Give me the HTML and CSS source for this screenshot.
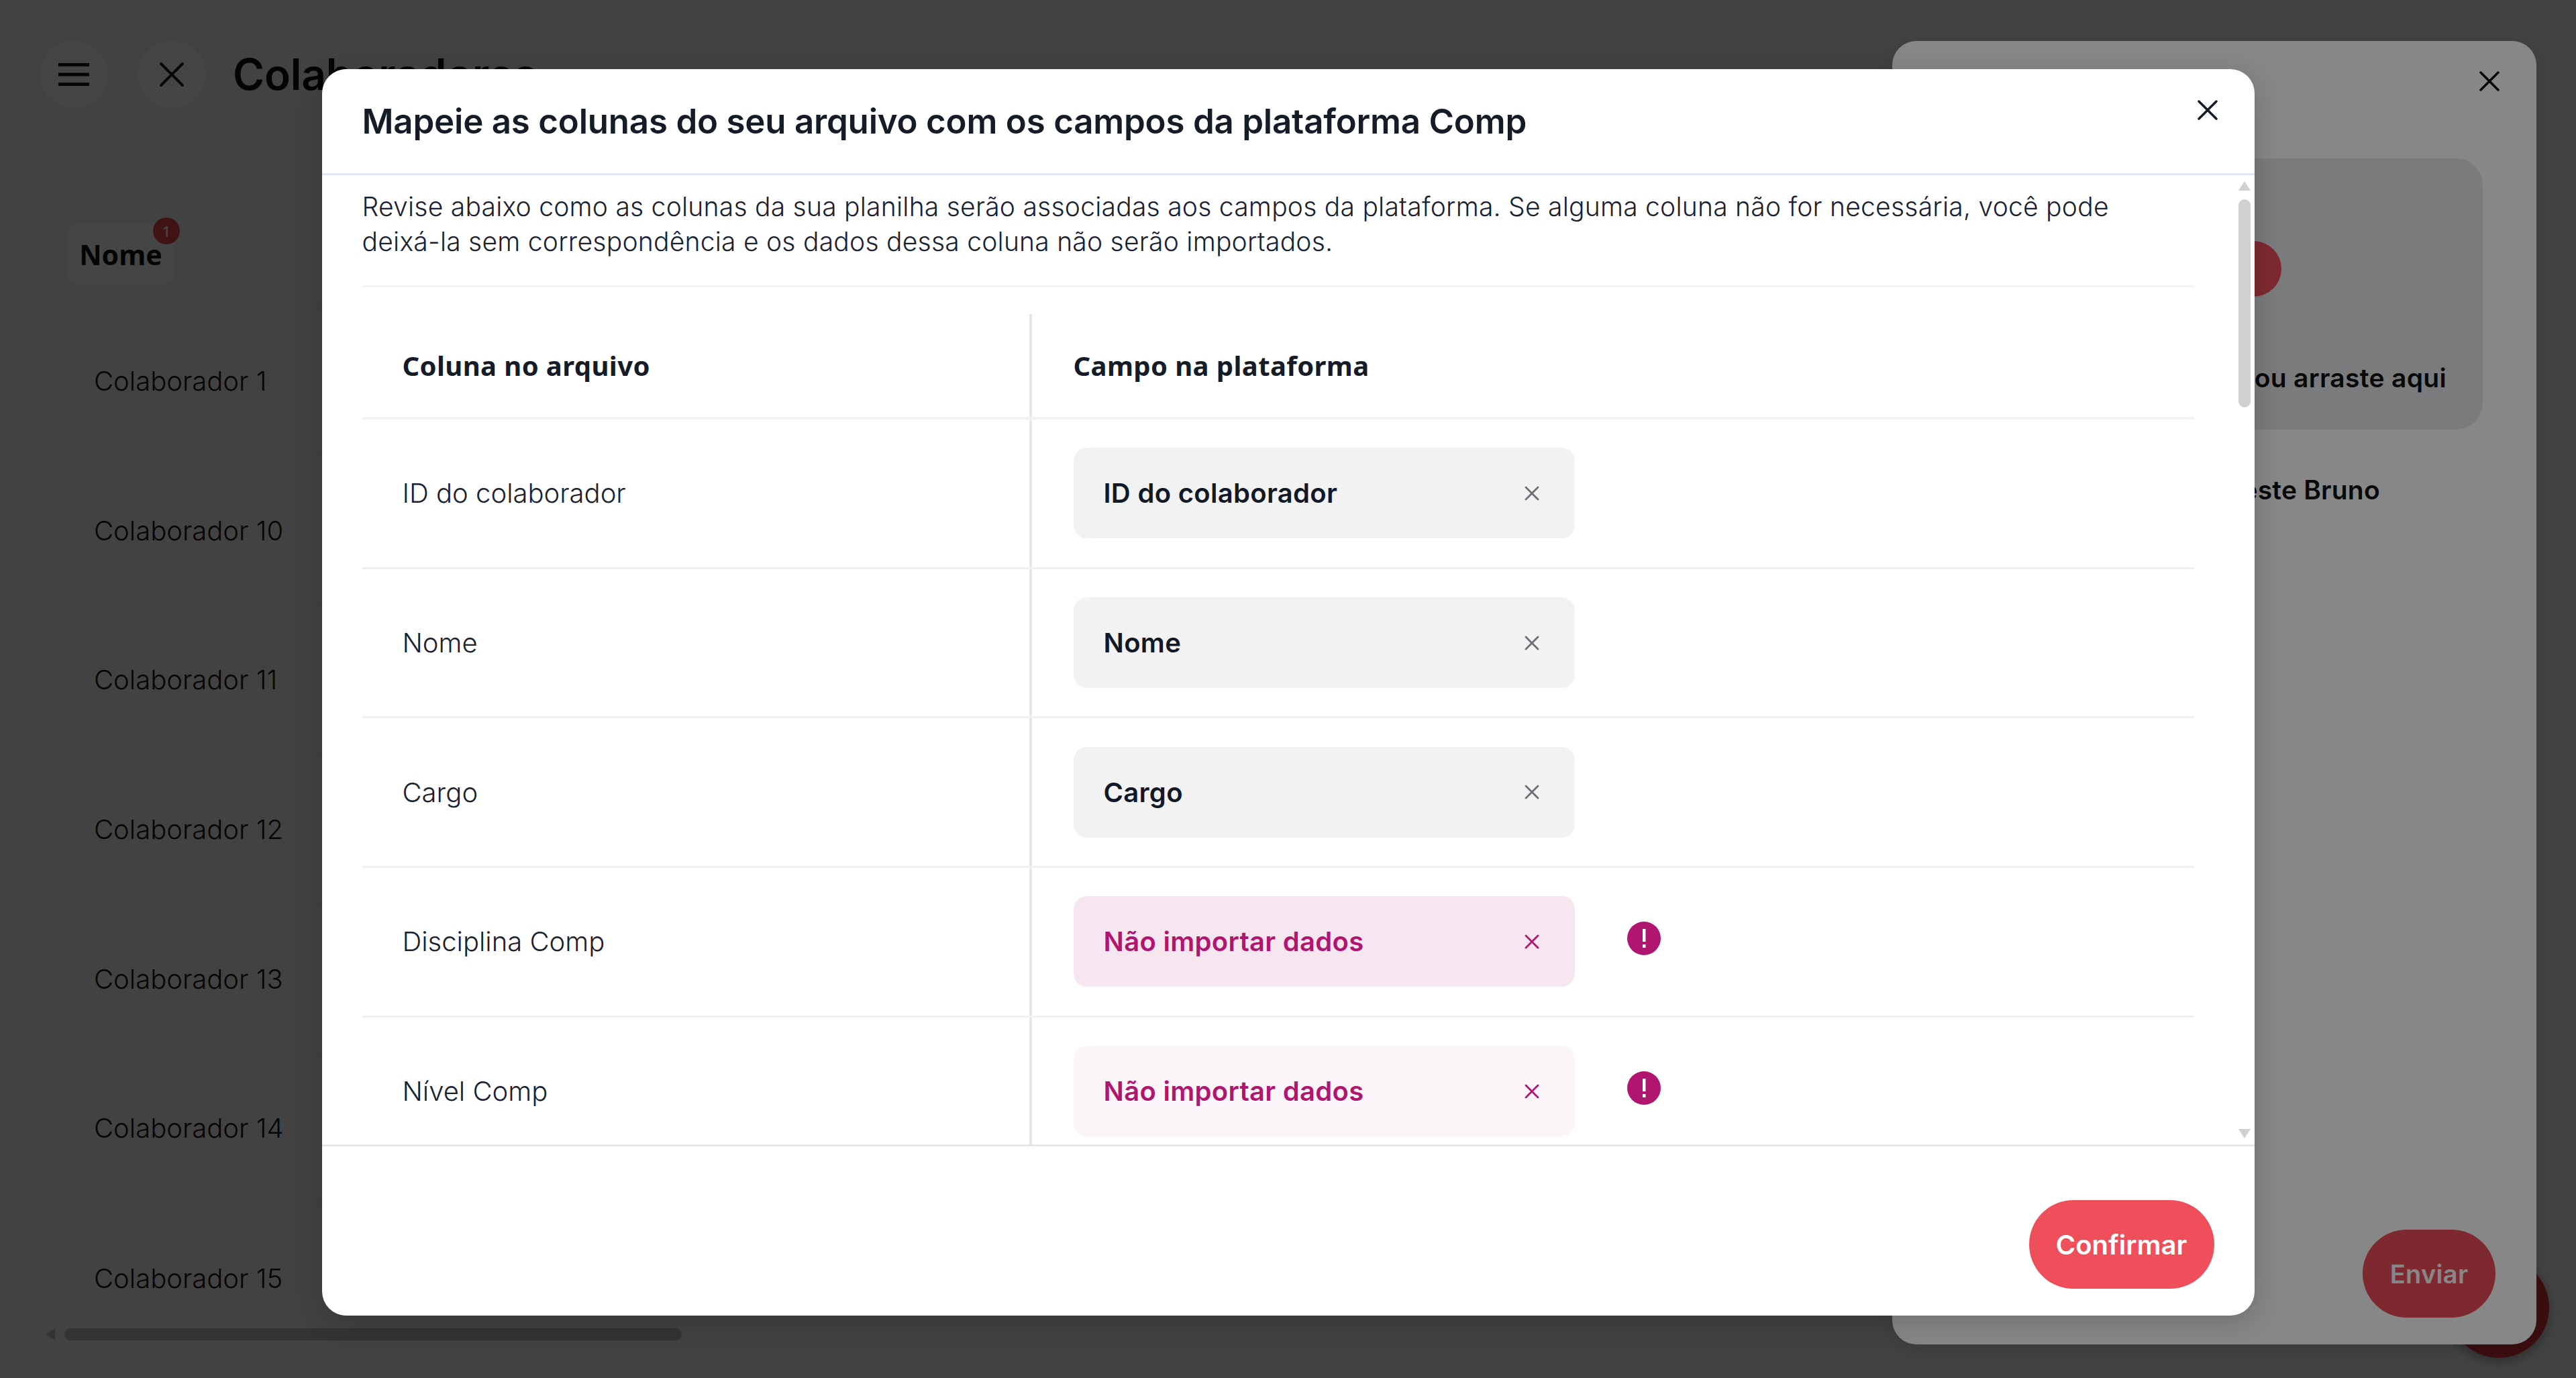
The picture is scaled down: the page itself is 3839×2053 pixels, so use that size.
FILE: index.html
```html
<!DOCTYPE html>
<html lang="pt-BR">
<head>
<meta charset="utf-8">
<title>Colaboradores</title>
<link rel="stylesheet" href="styles.css">
</head>
<body>
<div class="app">
  <main class="page">
    <header class="page-head">
      <button class="round-btn"><svg width="46" height="36" viewBox="0 0 46 36"><path d="M0 3.5H46M0 18H46M0 32.500H46" stroke="#161616" stroke-width="5"/></svg></button>
      <span class="head-sep"></span>
      <button class="round-btn"><svg width="36" height="36" viewBox="0 0 36 36"><path d="M2 2L34 34M34 2L2 34" stroke="#1c1c1c" stroke-width="4" stroke-linecap="round"/></svg></button>
      <h1 class="page-title">Colaboradores</h1>
    </header>
    <div class="list-head">
      <div class="name-chip">Nome<span class="badge">1</span></div>
    </div>
    <div class="list-row">Colaborador 1</div>
    <div class="list-row">Colaborador 10</div>
    <div class="list-row">Colaborador 11</div>
    <div class="list-row">Colaborador 12</div>
    <div class="list-row">Colaborador 13</div>
    <div class="list-row">Colaborador 14</div>
    <div class="list-row list-row-last">Colaborador 15</div>
    <div class="h-scroll"><span class="h-arrow"></span><span class="h-thumb"></span></div>
  </main>

  <div class="fab"></div>
  <div class="scrim"></div>

  <aside class="drawer">
    <button class="icon-btn drawer-close"><svg width="30" height="30" viewBox="0 0 30 30"><path d="M2 2L28 28M28 2L2 28" stroke="#0b0c0e" stroke-width="3.500" stroke-linecap="round"/></svg></button>
    <div class="dropzone">
      <span class="dz-dot"></span>
      <span class="dz-text">Clique ou arraste aqui</span>
    </div>
    <div class="file-name">Arquivo teste Bruno</div>
    <div class="drawer-foot"><button class="send-btn">Enviar</button></div>
  </aside>

  <div class="scrim"></div>

  <div class="modal-wrap">
    <section class="modal">
      <header class="modal-head">
        <h2 class="modal-title">Mapeie as colunas do seu arquivo com os campos da plataforma Comp</h2>
        <button class="icon-btn modal-close"><svg width="30" height="30" viewBox="0 0 30 30"><path d="M2 2L28 28M28 2L2 28" stroke="#151c27" stroke-width="3.500" stroke-linecap="round"/></svg></button>
      </header>
      <div class="modal-body">
        <p class="intro">Revise abaixo como as colunas da sua planilha serão associadas aos campos da plataforma. Se alguma coluna não for necessária, você pode deixá-la sem correspondência e os dados dessa coluna não serão importados.</p>
        <div class="map-table">
          <div class="map-row map-row-head">
            <div class="cell-left">Coluna no arquivo</div>
            <div class="cell-right">Campo na plataforma</div>
          </div>
          <div class="map-row">
            <div class="cell-left">ID do colaborador</div>
            <div class="cell-right"><div class="field-chip"><span>ID do colaborador</span><svg class="chip-x" width="22" height="22" viewBox="0 0 22 22"><path d="M2 2L20 20M20 2L2 20" stroke="#6b6e73" stroke-width="2.800" stroke-linecap="round"/></svg></div></div>
          </div>
          <div class="map-row">
            <div class="cell-left">Nome</div>
            <div class="cell-right"><div class="field-chip"><span>Nome</span><svg class="chip-x" width="22" height="22" viewBox="0 0 22 22"><path d="M2 2L20 20M20 2L2 20" stroke="#6b6e73" stroke-width="2.800" stroke-linecap="round"/></svg></div></div>
          </div>
          <div class="map-row">
            <div class="cell-left">Cargo</div>
            <div class="cell-right"><div class="field-chip"><span>Cargo</span><svg class="chip-x" width="22" height="22" viewBox="0 0 22 22"><path d="M2 2L20 20M20 2L2 20" stroke="#6b6e73" stroke-width="2.800" stroke-linecap="round"/></svg></div></div>
          </div>
          <div class="map-row">
            <div class="cell-left">Disciplina Comp</div>
            <div class="cell-right"><div class="field-chip chip-skip"><span>Não importar dados</span><svg class="chip-x" width="22" height="22" viewBox="0 0 22 22"><path d="M2 2L20 20M20 2L2 20" stroke="#b0156f" stroke-width="2.800" stroke-linecap="round"/></svg></div>
              <svg class="alert" width="50" height="50" viewBox="0 0 50 50"><circle cx="25" cy="25" r="25" fill="#b0156f"/><rect x="23" y="11" width="4.500" height="19" fill="#fff"/><rect x="23" y="34" width="4.500" height="5" fill="#fff"/></svg></div>
          </div>
          <div class="map-row">
            <div class="cell-left">Nível Comp</div>
            <div class="cell-right"><div class="field-chip chip-skip-light"><span>Não importar dados</span><svg class="chip-x" width="22" height="22" viewBox="0 0 22 22"><path d="M2 2L20 20M20 2L2 20" stroke="#b0156f" stroke-width="2.800" stroke-linecap="round"/></svg></div>
              <svg class="alert" width="50" height="50" viewBox="0 0 50 50"><circle cx="25" cy="25" r="25" fill="#b0156f"/><rect x="23" y="11" width="4.500" height="19" fill="#fff"/><rect x="23" y="34" width="4.500" height="5" fill="#fff"/></svg></div>
          </div>
        </div>
        <div class="v-scroll">
          <span class="v-arrow v-up"></span>
          <span class="v-thumb"></span>
          <span class="v-arrow v-down"></span>
        </div>
      </div>
      <footer class="modal-foot"><button class="confirm-btn">Confirmar</button></footer>
    </section>
  </div>
</div>
</body>
</html>
```

FILE: styles.css
```css
* { box-sizing: border-box; }
html, body { margin: 0; padding: 0; }
body { width: 3839px; height: 2053px; overflow: hidden; background: #efefef; font-family: "Inter", "Liberation Sans", sans-serif; color: #111827; }
button { border: 0; padding: 0; background: none; font: inherit; display: flex; align-items: center; justify-content: center; }
h1, h2, p { margin: 0; }

.app { position: relative; width: 3839px; height: 2053px; overflow: hidden; background: #efefef; }

/* underlying page */
.page { width: 100%; height: 100%; padding: 61px 0 0 60px; }
.page-head { display: flex; align-items: center; height: 100px; }
.round-btn { width: 100px; height: 100px; border-radius: 50%; background: #f8f8f8; }
.head-sep { width: 3px; height: 100px; margin: 0 21px 0 22px; background: #e4e4e4; }
.page-title { margin-left: 41px; font-size: 64px; font-weight: 600; letter-spacing: -0.200px; line-height: 96px; color: #111; white-space: nowrap; }
.list-head { width: 1500px; height: 296px; padding: 171px 0 0 40px; border-bottom: 2px solid #e6e6e6; }
.name-chip { position: relative; width: 160px; height: 92px; border-radius: 20px; background: #f7f7f7; display: flex; align-items: center; justify-content: center; padding-top: 2px; font-family: "Noto Sans", sans-serif; font-size: 41px; font-weight: 700; letter-spacing: 0; color: #111; }
.badge { position: absolute; left: 128px; top: -8px; width: 40px; height: 40px; border-radius: 50%; background: #e5444f; color: #fff; font-size: 22px; font-weight: 500; display: flex; align-items: center; justify-content: center; }
.list-row { width: 1500px; height: 222.700px; padding-left: 80px; display: flex; align-items: center; border-bottom: 2px solid #e6e6e6; font-size: 40px; font-weight: 300; color: #151515; }
.list-row-last { border-bottom: 0; }
.h-scroll { position: absolute; left: 68px; top: 1979px; display: flex; align-items: center; gap: 14px; }
.h-arrow { width: 0; height: 0; border-style: solid; border-width: 9px 14px 9px 0; border-color: transparent #b8b8b8 transparent transparent; }
.h-thumb { width: 920px; height: 18px; border-radius: 9px; background: #b8b8b8; }
.fab { position: absolute; left: 3649px; top: 1873px; width: 150px; height: 150px; border-radius: 50%; background: #d7333d; box-shadow: 0 6px 18px rgba(0,0,0,.3); }
.scrim { position: absolute; inset: 0; background: rgba(0,0,0,.47); }

/* drawer */
.drawer { position: absolute; left: 2820px; top: 61px; width: 960px; height: 1942px; border-radius: 36px; background: #fff; padding: 175px 80px 40px 196px; display: flex; flex-direction: column; box-shadow: 0 6px 24px rgba(0,0,0,.15); }
.drawer-close { position: absolute; right: 55px; top: 45px; }
.dropzone { position: relative; height: 404px; border-radius: 40px; background: #e7e9eb; display: flex; flex-direction: column; align-items: center; padding-top: 123px; }
.dz-dot { width: 83px; height: 83px; border-radius: 50%; background: #ee4f5b; }
.dz-text { align-self: flex-end; margin: 97px 54px 0 0; font-size: 39px; font-weight: 600; letter-spacing: 0.300px; color: #111; white-space: nowrap; }
.file-name { margin-top: 66px; font-size: 39px; font-weight: 600; letter-spacing: 0.200px; color: #111; white-space: nowrap; text-align: center; }
.drawer-foot { margin-top: auto; display: flex; justify-content: flex-end; }
.send-btn { width: 198px; height: 131px; border-radius: 66px; background: #ee4f5b; color: #fff; font-size: 38px; font-weight: 600; letter-spacing: 0.300px; margin-right: -19px; }

/* modal */
.modal-wrap { position: absolute; inset: 0; display: flex; justify-content: center; align-items: flex-start; padding-top: 103px; }
.modal { width: 2880px; height: 1857px; border-radius: 36px; background: #fff; display: flex; flex-direction: column; overflow: hidden; box-shadow: 0 10px 40px rgba(0,0,0,.18); }
.modal-head { flex: none; height: 158px; padding: 0 60px; display: flex; align-items: center; justify-content: space-between; border-bottom: 3px solid #e3e8f0; }
.modal-title { font-size: 51px; font-weight: 600; letter-spacing: -0.200px; color: #151c27; white-space: nowrap; }
.modal-close { margin-right: -5px; margin-bottom: 33px; }
.modal-body { position: relative; flex: none; height: 1447px; overflow: hidden; padding: 21px 90px 0 60px; border-bottom: 3px solid #e3e8f0; }
.intro { padding: 0 90px 39px 0; border-bottom: 3px solid #f2f3f5; font-size: 39px; font-weight: 300; letter-spacing: 0.240px; line-height: 52px; color: #1a2130; }
.map-table { margin-top: 40px; }
.map-row { display: grid; grid-template-columns: 998px 1fr; height: 222.700px; border-bottom: 3px solid #f0f0f1; }
.map-row-head { height: 157px; border-bottom: 4px solid #f0f2f6; }
.map-row-head .cell-left, .map-row-head .cell-right { font-family: "Noto Sans", sans-serif; font-size: 40px; font-weight: 700; letter-spacing: 0.400px; color: #151c27; }
.cell-left { display: flex; align-items: center; padding-left: 60px; border-right: 4px solid #e6e6e6; font-size: 40px; font-weight: 300; color: #1a2130; }
.cell-right { display: flex; align-items: center; padding-left: 62px; }
.field-chip { width: 747px; height: 135px; border-radius: 20px; background: #f2f2f3; padding: 0 53px 0 45px; display: flex; align-items: center; justify-content: space-between; font-size: 40px; font-weight: 600; letter-spacing: 0.300px; color: #111827; }
.chip-skip { background: #f6e6f0; color: #b0156f; }
.chip-skip-light { background: #fbf5fa; color: #b0156f; }
.alert { margin-left: 78px; margin-top: -10px; }

.v-scroll { position: absolute; right: 6px; top: 9px; bottom: 9px; width: 18px; display: flex; flex-direction: column; }
.v-arrow { width: 0; height: 0; border-style: solid; border-color: transparent; }
.v-up { border-width: 0 9px 14px 9px; border-bottom-color: #cfd0d2; }
.v-down { margin-top: auto; border-width: 14px 9px 0 9px; border-top-color: #cfd0d2; }
.v-thumb { margin-top: 13px; height: 310px; border-radius: 9px; background: #cfd0d2; }

.modal-foot { flex: 1; display: flex; justify-content: flex-end; padding: 80px 60px 0 0; }
.confirm-btn { width: 276px; height: 132px; border-radius: 66px; background: #ee4f5b; color: #fff; font-size: 40px; font-weight: 600; }
```
